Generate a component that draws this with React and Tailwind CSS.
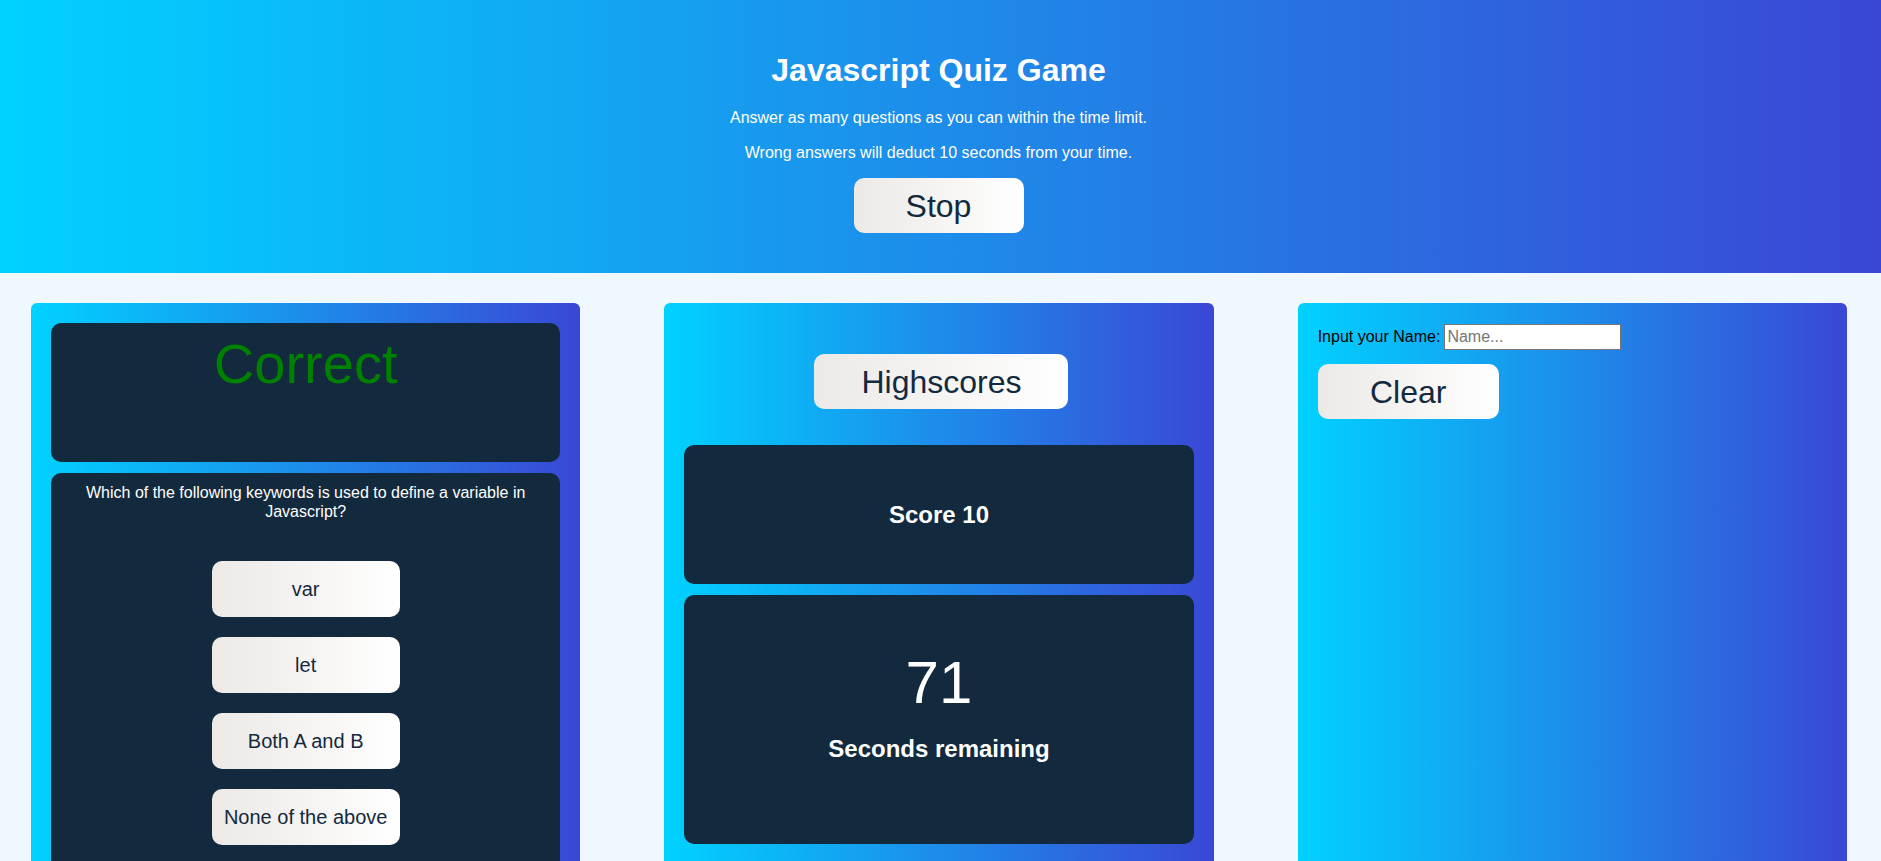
const panelBg = "bg-[linear-gradient(to_right,#00d2ff,#3a47d5)]";
const btnBase = "rounded-[10px] bg-[linear-gradient(to_right,#ece9e6,#ffffff)] text-[#13293d] flex items-center justify-center";

function AnswerButton({ label }) {
    return (
        <button className={`${btnBase} w-[188px] h-[56px] text-[20px]`}>{label}</button>
    );
}

function QuizPanel() {
    const answers = ["var", "let", "Both A and B", "None of the above"];
    return (
        <section className={`${panelBg} flex-1 h-[600px] rounded-[6px] p-[20px] flex flex-col gap-[11px]`}>
            <div className="h-[139px] shrink-0 rounded-[10px] bg-[#13293d] text-center pt-[9px]">
                <p className="text-[56px] leading-[64px] text-[#008000]">Correct</p>
            </div>
            <div className="flex-1 rounded-[10px] bg-[#13293d] pt-[10px] px-[20px]">
                <p className="text-white text-center text-[16px] leading-[19px]">
                    Which of the following keywords is used to define a variable in Javascript?
                </p>
                <div className="mt-[40px] flex flex-col items-center gap-[20px]">
                    {answers.map((a) => <AnswerButton key={a} label={a} />)}
                </div>
            </div>
        </section>
    );
}

function ScorePanel() {
    return (
        <section className={`${panelBg} flex-1 h-[600px] rounded-[6px] pt-[51px] px-[20px] flex flex-col`}>
            <button className={`${btnBase} self-center ml-[5px] w-[254px] h-[55px] shrink-0 text-[32px]`}>Highscores</button>
            <div className="mt-[36px] h-[139px] shrink-0 rounded-[10px] bg-[#13293d] flex items-center justify-center">
                <h2 className="text-white text-[24px] font-bold leading-[28px]">Score 10</h2>
            </div>
            <div className="mt-[11px] h-[249px] shrink-0 rounded-[10px] bg-[#13293d] pt-[53px] flex flex-col items-center text-white">
                <p className="text-[60px] leading-[69px]">71</p>
                <h2 className="mt-[18px] text-[24px] font-bold leading-[28px]">Seconds remaining</h2>
            </div>
        </section>
    );
}

function NamePanel() {
    return (
        <section className={`${panelBg} flex-1 h-[600px] rounded-[6px] pt-[21px] px-[20px] flex flex-col items-start`}>
            <div className="flex items-center">
                <label className="text-black text-[16px] leading-[18px]">Input your Name:</label>
                <input
                    type="text"
                    placeholder="Name..."
                    className="ml-[4px] w-[177px] h-[26px] bg-white border border-[#767676] px-[2px] text-[16px] text-black placeholder:text-[#757575] outline-none"
                />
            </div>
            <button className={`${btnBase} mt-[14px] w-[181px] h-[55px] text-[32px]`}>Clear</button>
        </section>
    );
}

export default function App() {
    return (
        <div className="h-screen overflow-hidden bg-[#f0f8ff] font-['Liberation_Sans',Arial,sans-serif]">
            <header className={`${panelBg} h-[273px] text-white text-center flex flex-col items-center pt-[52px] pr-[4px]`}>
                <h1 className="text-[32px] font-bold leading-[37px]">Javascript Quiz Game</h1>
                <p className="mt-[20px] text-[16px] leading-[18px]">Answer as many questions as you can within the time limit.</p>
                <p className="mt-[17px] text-[16px] leading-[18px]">Wrong answers will deduct 10 seconds from your time.</p>
                <button className={`${btnBase} mt-[16px] w-[170px] h-[55px] text-[32px]`}>Stop</button>
            </header>
            <main className="flex gap-[84px] pl-[31px] pr-[34px] pt-[30px]">
                <QuizPanel />
                <ScorePanel />
                <NamePanel />
            </main>
        </div>
    );
}
